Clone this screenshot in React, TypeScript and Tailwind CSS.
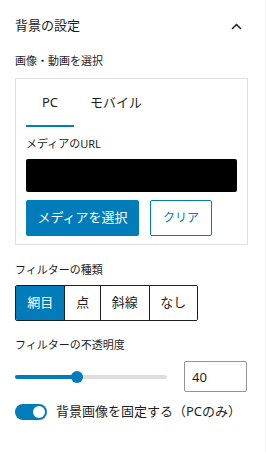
import { useState } from "react";

const filters = ["網目", "点", "斜線", "なし"];

export default function App() {
  const [tab, setTab] = useState("PC");
  const [filter, setFilter] = useState("網目");
  const [opacity, setOpacity] = useState(40);
  const [fixed, setFixed] = useState(true);

  return (
    <div
      className="w-[266px] h-[452px] bg-white border-r border-[#f0f0f0] text-[#1e1e1e]"
      style={{ fontFamily: '"Noto Sans", "Noto Sans CJK JP", sans-serif' }}
    >
      {/* パネルの見出し */}
      <div className="flex items-center justify-between h-[50px] pl-[15px] pr-[23px] pt-[2px]">
        <span className="text-[13px] font-normal">背景の設定</span>
        <svg width="11" height="7" viewBox="0 0 11 7" fill="none">
          <path d="M1 6 5.5 1.5 10 6" stroke="#1e1e1e" strokeWidth="1.5" />
        </svg>
      </div>

      <div className="px-[15px]">
        <div className="text-[11px] leading-[16px] mt-[3px]">画像・動画を選択</div>

        {/* PC / モバイル タブ */}
        <div className="mt-[9px] w-[233px] h-[167px] border border-[#e0e0e0] px-[10px]">
          <div className="flex h-[48px]">
            {["PC", "モバイル"].map((t) => (
              <button
                key={t}
                onClick={() => setTab(t)}
                className={
                  "px-4 text-[13px] " +
                  (tab === t ? "border-b-2 border-[#007cba] pt-[2px]" : "")
                }
              >
                {t}
              </button>
            ))}
          </div>
          <div className="text-[11px] leading-[16px] mt-[9px]">メディアのURL</div>
          <div className="mt-[7px] h-[33px] bg-black rounded-[2px]"></div>
          <div className="flex gap-[11px] mt-[8px]">
            <button className="h-[36px] w-[113px] bg-[#007cba] text-white text-[13px] rounded-[2px]">
              メディアを選択
            </button>
            <button className="h-[36px] w-[62px] border border-[#007cba] text-[#007cba] text-[12px] rounded-[2px]">
              クリア
            </button>
          </div>
        </div>

        <div className="text-[11px] leading-[16px] mt-[17px]">フィルターの種類</div>
        <div className="flex mt-[7px] w-[183px] h-[36px] border border-[#1e1e1e] rounded-[2px] overflow-hidden">
          {filters.map((f, i) => (
            <button
              key={f}
              onClick={() => setFilter(f)}
              className={
                "h-full text-[13px] " +
                (i === 0 ? "w-[49px] " : i === 1 ? "w-[36px] border-l border-[#1e1e1e] " : "w-[49px] border-l border-[#1e1e1e] ") +
                (filter === f ? "bg-[#007cba] text-white" : "bg-white")
              }
            >
              {f}
            </button>
          ))}
        </div>

        <div className="text-[11px] leading-[16px] mt-[16px]">フィルターの不透明度</div>
        <div className="flex items-center mt-[8px]">
          <div className="relative w-[152px] h-[31px] flex items-center">
            <div className="w-full h-[4px] rounded-full bg-[#dddddd]"></div>
            <div
              className="absolute left-0 h-[4px] rounded-full bg-[#007cba]"
              style={{ width: `${opacity * 1.55}px` }}
            ></div>
            <div
              className="absolute w-[12px] h-[12px] rounded-full bg-[#007cba]"
              style={{ left: `${opacity * 1.55 - 6}px` }}
            ></div>
          </div>
          <input
            value={opacity}
            onChange={(e) => setOpacity(Number(e.target.value) || 0)}
            className="ml-[17px] w-[63px] h-[31px] border border-[#949494] rounded-[2px] px-[7px] text-[13px] outline-none"
          />
        </div>

        <div className="flex items-center mt-[10px]">
          <button
            onClick={() => setFixed(!fixed)}
            className={
              "relative w-[32px] h-[16px] rounded-full flex items-center " +
              (fixed ? "bg-[#007cba] justify-end" : "bg-[#949494] justify-start")
            }
          >
            <span className="w-[12px] h-[12px] rounded-full bg-white mx-[2px]"></span>
          </button>
          <span className="ml-[9px] text-[13px]">背景画像を固定する（PCのみ）</span>
        </div>
      </div>
    </div>
  );
}
